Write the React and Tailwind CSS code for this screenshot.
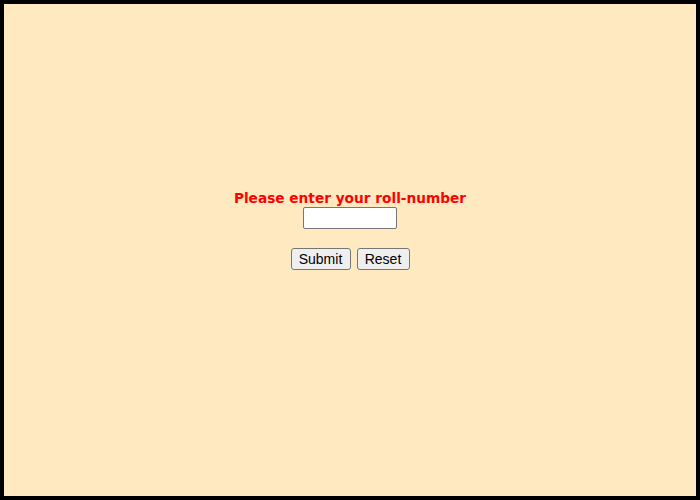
export default function App() {
  return (
    <div className="w-[700px] h-[500px] box-border border-4 border-black bg-[#ffe9c1] flex flex-col items-center pt-[186px]">
      <h3 className="font-['DejaVu_Sans',Verdana,sans-serif] font-bold text-[13.7px] leading-[17px] text-[#ff0000]">
        Please enter your roll-number
      </h3>
      <input
        type="text"
        className="w-[94px] h-[22px] bg-white border border-[#767676] rounded-[2px]"
      />
      <div className="flex gap-[6px] mt-[19px] font-['Liberation_Sans',Arial,sans-serif] text-[14px]">
        <button className="w-[60px] h-[22px] bg-[#efefef] border border-[#767676] rounded-[3px] text-black">
          Submit
        </button>
        <button className="w-[53px] h-[22px] bg-[#efefef] border border-[#767676] rounded-[3px] text-black">
          Reset
        </button>
      </div>
    </div>
  );
}
